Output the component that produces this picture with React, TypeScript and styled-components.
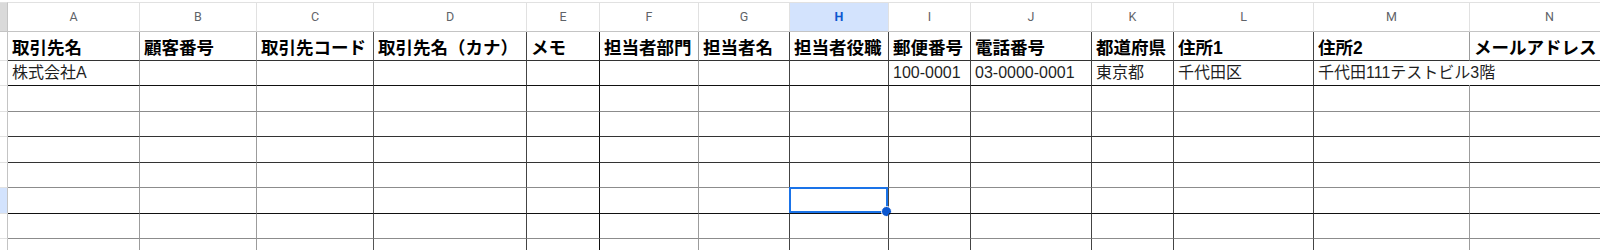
import React from 'react';
import styled, { createGlobalStyle } from 'styled-components';

const GlobalStyle = createGlobalStyle`
  html, body {
    margin: 0;
    padding: 0;
    background: #fff;
  }
  body {
    font-family: "Liberation Sans", "Noto Sans CJK JP", sans-serif;
    overflow: hidden;
  }
`;

type Column = {
  key: string;
  width: number;
  line: string;
  title: string;
};

const columns: Column[] = [
  { key: 'A', width: 132, line: '#9c9c9c', title: '取引先名' },
  { key: 'B', width: 117, line: '#9c9c9c', title: '顧客番号' },
  { key: 'C', width: 117, line: '#555', title: '取引先コード' },
  { key: 'D', width: 153, line: '#444', title: '取引先名（カナ）' },
  { key: 'E', width: 73, line: '#111', title: 'メモ' },
  { key: 'F', width: 99, line: '#9c9c9c', title: '担当者部門' },
  { key: 'G', width: 91, line: '#444', title: '担当者名' },
  { key: 'H', width: 99, line: '#444', title: '担当者役職' },
  { key: 'I', width: 82, line: '#444', title: '郵便番号' },
  { key: 'J', width: 121, line: '#444', title: '電話番号' },
  { key: 'K', width: 82, line: '#444', title: '都道府県' },
  { key: 'L', width: 140, line: '#444', title: '住所1' },
  { key: 'M', width: 156, line: '#9c9c9c', title: '住所2' },
  { key: 'N', width: 160, line: '#444', title: 'メールアドレス' },
];

const firstRecord: Record<string, string> = {
  A: '株式会社A',
  I: '100-0001',
  J: '03-0000-0001',
  K: '東京都',
  L: '千代田区',
  M: '千代田111テストビル3階',
};

// bottom line tone of each sheet row (1..9)
const rowLines = ['#333', '#111', '#8c8c8c', '#333', '#333', '#8c8c8c', '#111', '#8c8c8c', '#444'];
const rowHeights = [29, 25, 26, 25, 26, 25, 26, 25, 26];

const selectedCol = 'H';
const selectedRow = 7;

const Sheet = styled.div`
  display: grid;
  grid-template-columns: 8px ${columns.map((c) => `${c.width}px`).join(' ')};
  grid-template-rows: 30px ${rowHeights.map((h) => `${h}px`).join(' ')};
  margin-top: 2px;
  width: max-content;
`;

const Corner = styled.div`
  box-sizing: border-box;
  background: #dadada;
  border-top: 1px solid #e1e1e1;
  border-right: 1px solid #c4c4c4;
  border-bottom: 1px solid #c4c4c4;
`;

const ColHead = styled.div<{ $selected?: boolean }>`
  box-sizing: border-box;
  display: flex;
  align-items: center;
  justify-content: center;
  border-top: 1px solid #e1e1e1;
  border-right: 1px solid #e1e1e1;
  border-bottom: 1px solid #c4c4c4;
  background: ${(p) => (p.$selected ? '#d3e3fd' : '#fff')};
  color: ${(p) => (p.$selected ? '#0b57d0' : '#5f6368')};
  font-family: Roboto, "Liberation Sans", sans-serif;
  font-size: 12.5px;
  font-weight: ${(p) => (p.$selected ? 700 : 400)};
  padding-bottom: 1px;
`;

const RowHead = styled.div<{ $selected?: boolean }>`
  box-sizing: border-box;
  border-right: 1px solid #c4c4c4;
  border-bottom: 1px solid #e1e1e1;
  background: ${(p) => (p.$selected ? '#d3e3fd' : '#fff')};
`;

const Cell = styled.div<{ $right: string; $bottom: string; $bold?: boolean }>`
  box-sizing: border-box;
  position: relative;
  display: flex;
  align-items: flex-end;
  padding: 0 4px 2px 4px;
  border-right: 1px solid ${(p) => p.$right};
  border-bottom: 1px solid ${(p) => p.$bottom};
  white-space: nowrap;
  color: ${(p) => (p.$bold ? '#000' : '#1f1f1f')};
  font-size: ${(p) => (p.$bold ? '17.5px' : '16px')};
  font-weight: ${(p) => (p.$bold ? 700 : 400)};
  line-height: 20px;
`;

const Selection = styled.div`
  position: absolute;
  top: -1px;
  left: -1px;
  right: 0;
  bottom: 0;
  border: 2px solid #1a73e8;
  pointer-events: none;
`;

const FillHandle = styled.div`
  position: absolute;
  right: -6px;
  bottom: -6px;
  width: 9px;
  height: 9px;
  border-radius: 50%;
  background: #0b57d0;
  border: 1px solid #fff;
`;

export default function App() {
  return (
    <>
      <GlobalStyle />
      <Sheet>
        <Corner />
        {columns.map((c) => (
          <ColHead key={c.key} $selected={c.key === selectedCol}>
            {c.key}
          </ColHead>
        ))}
        {rowHeights.map((_, i) => {
          const rowNo = i + 1;
          return (
            <React.Fragment key={rowNo}>
              <RowHead $selected={rowNo === selectedRow} />
              {columns.map((c, ci) => {
                let text = '';
                if (rowNo === 1) text = c.title;
                if (rowNo === 2) text = firstRecord[c.key] ?? '';
                // 住所2 overflows into the next cell, hiding the line between
                const spills = rowNo === 2 && c.key === 'M';
                const nextEmpty = ci < columns.length - 1;
                return (
                  <Cell
                    key={c.key}
                    $right={spills && nextEmpty ? 'transparent' : c.line}
                    $bottom={rowLines[i]}
                    $bold={rowNo === 1}
                  >
                    {text}
                    {rowNo === selectedRow && c.key === selectedCol && (
                      <Selection>
                        <FillHandle />
                      </Selection>
                    )}
                  </Cell>
                );
              })}
            </React.Fragment>
          );
        })}
      </Sheet>
    </>
  );
}
